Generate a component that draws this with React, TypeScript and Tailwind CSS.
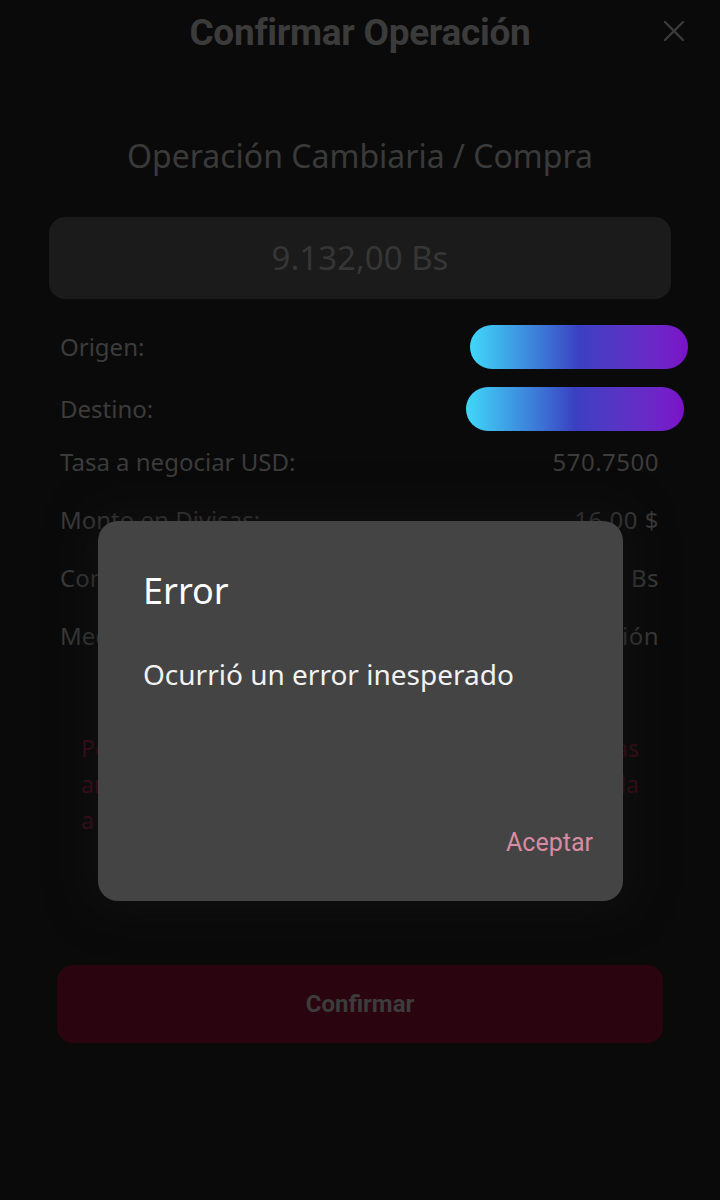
import { X } from "lucide-react";

const rows = [
	{ label: "Tasa a negociar USD:", value: "570.7500" },
	{ label: "Monto en Divisas:", value: "16,00 $" },
	{ label: "Comisión:", value: "91,32 Bs" },
	{ label: "Mecanismo:", value: "Intervención" },
];

function GradientPill({ className }: { className: string }) {
	return (
		<div
			className={`h-[44px] w-[218px] rounded-full bg-gradient-to-r from-[#40d8f8] via-[#3a40c2] to-[#7b10c9] ${className}`}
		/>
	);
}

export default function App() {
	return (
		<div className="relative h-[1200px] w-[720px] overflow-hidden bg-[#0a0a0a] font-['Noto_Sans',sans-serif]">
			{/* Header */}
			<div className="relative flex h-[66px] items-center justify-center">
				<h1 className="font-['Roboto',sans-serif] text-[37px] font-bold tracking-[-0.3px] text-[#3b3b3b]">
					Confirmar Operación
				</h1>
				<button className="absolute right-[28px] top-[13px] text-[#3b3b3b]">
					<X size={36} strokeWidth={1.6} />
				</button>
			</div>

			<h2 className="mt-[66px] text-center text-[32px] text-[#3a3a3a]">
				Operación Cambiaria / Compra
			</h2>

			{/* Amount */}
			<div className="mx-[49px] mt-[37px] flex h-[82px] items-center justify-center rounded-[16px] bg-[#1b1b1b]">
				<span className="text-[33px] text-[#363636]">9.132,00 Bs</span>
			</div>

			{/* Details */}
			<div className="mt-[26px] pl-[60px] pr-[61px] text-[24px] text-[#3c3c3c]">
				<div className="flex h-[44px] items-center justify-between">
					<span>Origen:</span>
					<GradientPill className="-mr-[29px]" />
				</div>
				<div className="mt-[18px] flex h-[44px] items-center justify-between">
					<span>Destino:</span>
					<GradientPill className="-mr-[25px]" />
				</div>
				<div className="mt-[2px] flex flex-col">
					{rows.map((row) => (
						<div key={row.label} className="flex h-[58px] items-center justify-between">
							<span>{row.label}</span>
							<span className="tracking-[0.5px]">{row.value}</span>
						</div>
					))}
				</div>
			</div>

			{/* Warning */}
			<div className="mx-[81px] mt-[65px] text-[23px] leading-[36px] text-[#3e0c1a]">
				<p className="whitespace-nowrap text-justify [text-align-last:justify]">
					Por favor verifique los montos y las cuentas
				</p>
				<p className="whitespace-nowrap text-justify [text-align-last:justify]">
					antes de confirmar. La operación será aplicada
				</p>
				<p>a la tasa indicada.</p>
			</div>

			{/* Confirm button */}
			<div className="mx-[57px] mt-[127px] flex h-[78px] items-center justify-center rounded-[16px] bg-[#2a0510]">
				<span className="font-['Roboto',sans-serif] text-[24px] font-bold text-[#3c3c3c]">
					Confirmar
				</span>
			</div>

			{/* Error dialog */}
			<div className="absolute left-[98px] top-[521px] flex h-[380px] w-[525px] flex-col rounded-[20px] bg-[#444444] px-[45px] shadow-[0_0_40px_10px_rgba(20,20,20,0.6)]">
				<div className="mt-[48px] text-[36px] leading-[44px] text-white">Error</div>
				<div className="mt-[44px] text-[28px] leading-[34px] text-[#f2f2f2]">
					Ocurrió un error inesperado
				</div>
				<div className="mt-auto mb-[40px] -mr-[15px] text-right font-['Roboto',sans-serif] text-[25px] text-[#d98ba2]">
					Aceptar
				</div>
			</div>
		</div>
	);
}
